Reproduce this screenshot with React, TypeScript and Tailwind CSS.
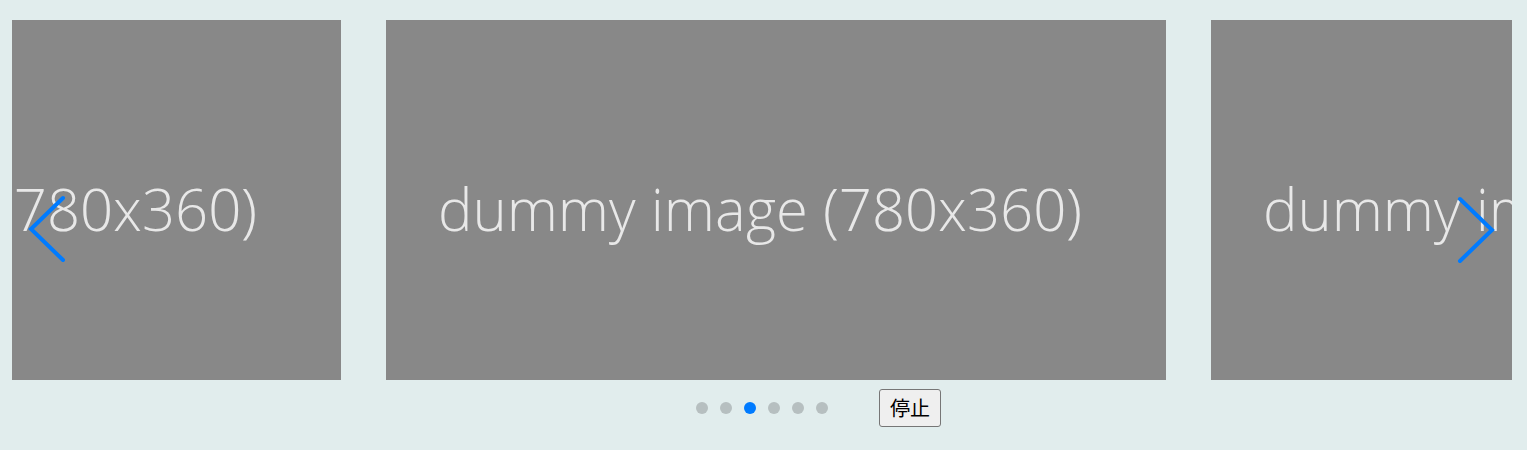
import React from "react";

const Slide = () => (
  <div className="w-[780px] h-[360px] shrink-0 bg-[#888888] flex items-center justify-center">
    <span
      className="text-[#e8e8e8] text-[58px] font-light leading-none whitespace-nowrap pr-[32px] pt-[18px]"
      style={{ fontFamily: '"Open Sans Light", "Open Sans", sans-serif' }}
    >
      dummy image (780x360)
    </span>
  </div>
);

export default function App() {
  return (
    <div className="w-[1527px] h-[450px] bg-[#e1eded] pt-[20px] pl-[12px]">
      <div className="relative w-[1500px] h-[360px] overflow-hidden">
        <div className="flex gap-[45px] -ml-[451px]">
          <Slide />
          <Slide />
          <Slide />
        </div>
        <svg className="absolute left-[16px] top-[175px]" width="40" height="70" viewBox="0 0 40 70">
          <polyline points="35,3 3,34 35,65" fill="none" stroke="#007bff" strokeWidth="4" strokeLinecap="round" strokeLinejoin="miter" />
        </svg>
        <svg className="absolute left-[1445px] top-[176px]" width="40" height="70" viewBox="0 0 40 70">
          <polyline points="3,3 35,34 3,65" fill="none" stroke="#007bff" strokeWidth="4" strokeLinecap="round" strokeLinejoin="miter" />
        </svg>
      </div>
      <div className="grid grid-cols-[1fr_auto_1fr] items-center w-[1500px] mt-[9px]">
        <div />
        <div className="flex gap-[12px]">
          {[0, 1, 2, 3, 4, 5].map((i) => (
            <span
              key={i}
              className={`w-[12px] h-[12px] rounded-full ${i === 2 ? "bg-[#007bff]" : "bg-[#b6bfc0]"}`}
            />
          ))}
        </div>
        <div className="flex">
          <button
            className="ml-[51px] h-[38px] px-[10px] border border-[#767676] rounded-[3px] bg-[#efefef] text-[20px] text-black leading-none"
            style={{ fontFamily: '"Noto Sans CJK JP", sans-serif' }}
          >
            停止
          </button>
        </div>
      </div>
    </div>
  );
}
